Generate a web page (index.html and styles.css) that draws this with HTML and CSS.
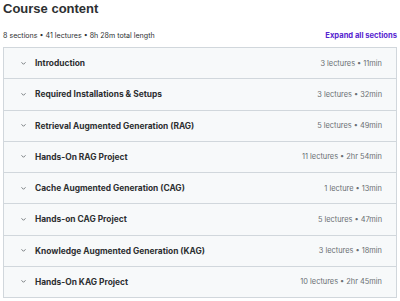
FILE: index.html
```html
<!DOCTYPE html>
<html lang="en">
<head>
    <meta charset="UTF-8">
    <meta name="viewport" content="width=device-width, initial-scale=1.0">
    <title>Course content</title>
    <link rel="stylesheet" href="styles.css">
</head>
<body>
    <div class="course">
        <h2 class="title">Course content</h2>
        <div class="meta">
            <span>8 sections • 41 lectures • 8h 28m total length</span>
            <button class="expand">Expand all sections</button>
        </div>
        <div class="sections">
            <div class="section"><span class="chev"><svg width="7" height="5" viewBox="0 0 7 5"><path d="M1.5 1.3l2 2 2-2" fill="none" stroke="#6a6f73" stroke-width="0.9"/></svg></span><span class="name">Introduction</span><span class="info">3 lectures • 11min</span></div>
            <div class="section"><span class="chev"><svg width="7" height="5" viewBox="0 0 7 5"><path d="M1.5 1.3l2 2 2-2" fill="none" stroke="#6a6f73" stroke-width="0.9"/></svg></span><span class="name">Required Installations &amp; Setups</span><span class="info">3 lectures • 32min</span></div>
            <div class="section"><span class="chev"><svg width="7" height="5" viewBox="0 0 7 5"><path d="M1.5 1.3l2 2 2-2" fill="none" stroke="#6a6f73" stroke-width="0.9"/></svg></span><span class="name">Retrieval Augmented Generation (RAG)</span><span class="info">5 lectures • 49min</span></div>
            <div class="section"><span class="chev"><svg width="7" height="5" viewBox="0 0 7 5"><path d="M1.5 1.3l2 2 2-2" fill="none" stroke="#6a6f73" stroke-width="0.9"/></svg></span><span class="name">Hands-On RAG Project</span><span class="info">11 lectures • 2hr 54min</span></div>
            <div class="section"><span class="chev"><svg width="7" height="5" viewBox="0 0 7 5"><path d="M1.5 1.3l2 2 2-2" fill="none" stroke="#6a6f73" stroke-width="0.9"/></svg></span><span class="name">Cache Augmented Generation (CAG)</span><span class="info">1 lecture • 13min</span></div>
            <div class="section"><span class="chev"><svg width="7" height="5" viewBox="0 0 7 5"><path d="M1.5 1.3l2 2 2-2" fill="none" stroke="#6a6f73" stroke-width="0.9"/></svg></span><span class="name">Hands-on CAG Project</span><span class="info">5 lectures • 47min</span></div>
            <div class="section"><span class="chev"><svg width="7" height="5" viewBox="0 0 7 5"><path d="M1.5 1.3l2 2 2-2" fill="none" stroke="#6a6f73" stroke-width="0.9"/></svg></span><span class="name">Knowledge Augmented Generation (KAG)</span><span class="info">3 lectures • 18min</span></div>
            <div class="section"><span class="chev"><svg width="7" height="5" viewBox="0 0 7 5"><path d="M1.5 1.3l2 2 2-2" fill="none" stroke="#6a6f73" stroke-width="0.9"/></svg></span><span class="name">Hands-On KAG Project</span><span class="info">10 lectures • 2hr 45min</span></div>
        </div>
    </div>
</body>
</html>
```

FILE: styles.css
```css
body {
    margin: 0;
    background: #fff;
    font-family: Inter, "Noto Sans", sans-serif;
    color: #2d2f31;
}
.course {
    padding: 0 3px;
}
.title {
    margin: 0;
    padding-top: 1px;
    font-family: "Liberation Sans", Arial, sans-serif;
    font-size: 13px;
    font-weight: 700;
    line-height: 16px;
}
.meta {
    display: flex;
    justify-content: space-between;
    align-items: center;
    margin-top: 11px;
    height: 14px;
    font-size: 7.1px;
    color: #2d2f31;
}
.expand {
    border: none;
    background: none;
    padding: 0;
    font-family: inherit;
    font-size: 7.6px;
    font-weight: 700;
    color: #5624d0;
    cursor: pointer;
}
.sections {
    margin-top: 5px;
    border: 1px solid #d1d7dc;
    border-bottom: none;
}
.section {
    display: flex;
    align-items: center;
    height: 30.25px;
    padding: 0 14px 0 16px;
    background: #f7f9fa;
    border-bottom: 1px solid #d1d7dc;
    font-size: 8.4px;
}
.chev {
    display: flex;
    width: 15px;
}
.name {
    flex: 1;
    font-weight: 700;
}
.info {
    font-size: 7.4px;
    color: #6a6f73;
}
```
